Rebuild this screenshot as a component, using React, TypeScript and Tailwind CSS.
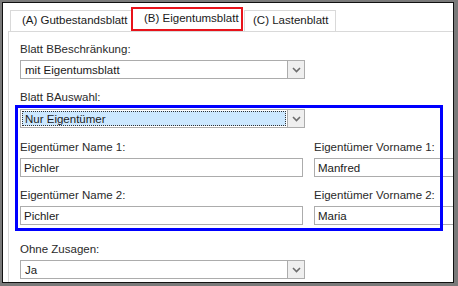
import React from "react";

const font = { fontFamily: '"Liberation Sans", Arial, sans-serif' };

function Chevron() {
  return (
    <svg width="9" height="6" viewBox="0 0 9 6">
      <path d="M1 1 L4.5 4.5 L8 1" fill="none" stroke="#6d6d6d" strokeWidth="1.6" />
    </svg>
  );
}

function Combo({ value, focused = false }: { value: string; focused?: boolean }) {
  return (
    <div className="flex h-[19px] w-[285px] border border-[#acacac] bg-white">
      <div className="flex flex-1 items-center p-[1px]">
        {focused ? (
          <div className="flex h-full w-full items-center border border-dotted border-[#333] bg-[#cce8ff] pl-[2px] text-[11.5px] leading-[14px] text-[#1a1a1a]">
            {value}
          </div>
        ) : (
          <div className="pl-[3px] text-[11.5px] leading-[14px] text-[#1a1a1a]">{value}</div>
        )}
      </div>
      <div className="flex w-[17px] items-center justify-center border-l border-[#acacac] bg-[#efefef]">
        <Chevron />
      </div>
    </div>
  );
}

function Input({ value, w }: { value: string; w: string }) {
  return (
    <div className={"flex h-[19px] shrink-0 items-center border border-[#acacac] bg-white pl-[3px] text-[11.5px] leading-[14px] text-[#1a1a1a] " + w}>
      {value}
    </div>
  );
}

function Label({ children }: { children: React.ReactNode }) {
  return <div className="h-[15px] whitespace-nowrap text-[11.5px] leading-[15px] text-[#2a2a2a]">{children}</div>;
}

export default function App() {
  return (
    <div style={font} className="h-[286px] w-[458px] overflow-hidden border-t-2 border-l-2 border-r-4 border-b-[3px] border-[#7a7a7a]">
      <div className="flex h-full w-full flex-col overflow-hidden border border-[#111] bg-white pl-[5px]">
        <div className="mt-[4px] flex h-[24px] shrink-0 items-end pl-[2px]">
          <div className="flex h-[21px] w-[121px] items-center whitespace-nowrap border-l border-t border-[#d9d9d9] pl-[11px] text-[11.5px] text-[#1a1a1a]">
            (A) Gutbestandsblatt
          </div>
          <div className="flex h-[24px] w-[112px] items-center whitespace-nowrap border-2 border-[#e8121a] pl-[11px] pb-[1px] text-[11.5px] text-[#1a1a1a]">
            (B) Eigentumsblatt
          </div>
          <div className="ml-[1px] flex h-[21px] w-[92px] items-center whitespace-nowrap border-l border-r border-t border-[#d9d9d9] pl-[8px] text-[11.5px] text-[#1a1a1a]">
            (C) Lastenblatt
          </div>
        </div>
        <div className="flex flex-1 flex-col border-l border-t border-[#d9d9d9] pl-[11px]">
          <div className="mt-[10px]">
            <Label>Blatt BBeschränkung:</Label>
          </div>
          <div className="mt-[3px]">
            <Combo value="mit Eigentumsblatt" />
          </div>
          <div className="mt-[11px]">
            <Label>Blatt BAuswahl:</Label>
          </div>
          <div className="relative -ml-[5px] pb-[6px] pl-[5px] pt-[3px]">
            <div className="mt-[1px]">
              <Combo value="Nur Eigentümer" focused />
            </div>
            <div className="mt-[12px] flex">
              <div className="flex w-[294px] shrink-0 flex-col">
                <Label>Eigentümer Name 1:</Label>
                <div className="mt-[3px]">
                  <Input value="Pichler" w="w-[283px]" />
                </div>
                <div className="mt-[11px]">
                  <Label>Eigentümer Name 2:</Label>
                </div>
                <div className="mt-[3px]">
                  <Input value="Pichler" w="w-[283px]" />
                </div>
              </div>
              <div className="flex shrink-0 flex-col">
                <Label>Eigentümer Vorname 1:</Label>
                <div className="mt-[3px]">
                  <Input value="Manfred" w="w-[160px]" />
                </div>
                <div className="mt-[11px]">
                  <Label>Eigentümer Vorname 2:</Label>
                </div>
                <div className="mt-[3px]">
                  <Input value="Maria" w="w-[160px]" />
                </div>
              </div>
            </div>
            <div className="pointer-events-none absolute left-0 top-0 h-full w-[428px] border-[3px] border-[#0000ff]" />
          </div>
          <div className="mt-[11px]">
            <Label>Ohne Zusagen:</Label>
          </div>
          <div className="mt-[3px]">
            <Combo value="Ja" />
          </div>
        </div>
      </div>
    </div>
  );
}
